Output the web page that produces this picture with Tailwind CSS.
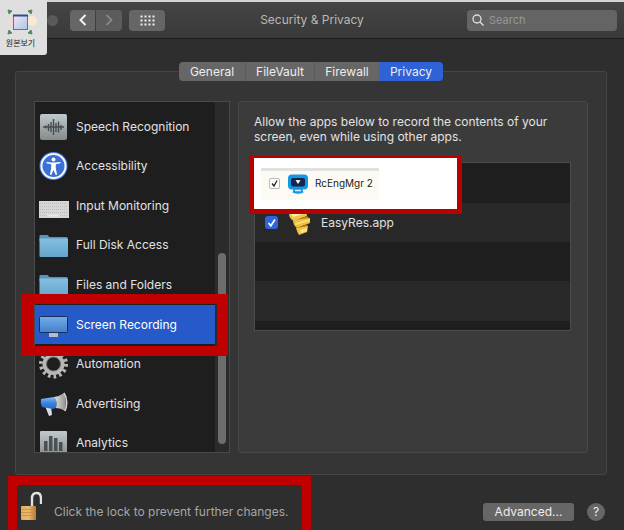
<!DOCTYPE html>
<html lang="en">
  <head>
    <meta charset="UTF-8" />
    <meta name="viewport" content="width=device-width, initial-scale=1.0" />
    <title>Security &amp; Privacy</title>
    <script src="https://cdn.jsdelivr.net/npm/@tailwindcss/browser@4"></script>
  </head>
  <body class="relative flex min-h-screen flex-col overflow-hidden bg-[#2e2e2e] font-['Inter','Noto_Sans_CJK_KR',sans-serif] text-[12px] text-[#e2e2e2]">
    <!-- Title bar -->
    <header class="grid h-[39px] grid-cols-[1fr_auto_1fr] items-center border-t-2 border-b border-t-[#d4d4d4] border-b-[#1d1d1d] bg-linear-to-b from-[#454545] to-[#393939] px-[7px]">
      <div class="flex items-center pl-10">
        <span class="size-[11px] rounded-full bg-[#5a5a5a]"></span>
        <button type="button" aria-label="Back" class="ml-3 flex h-[21px] w-[25px] items-center justify-center rounded-l bg-[#666]">
          <svg class="h-3 w-2" viewBox="0 0 8 12" fill="none" stroke="#f2f2f2" stroke-width="2"><path d="M6.5 1 1.5 6l5 5" /></svg>
        </button>
        <button type="button" aria-label="Forward" class="ml-px flex h-[21px] w-[26px] items-center justify-center rounded-r bg-[#5c5c5c]">
          <svg class="h-3 w-2" viewBox="0 0 8 12" fill="none" stroke="#8f8f8f" stroke-width="1.6"><path d="m1.500 1 5 5-5 5" /></svg>
        </button>
        <button type="button" aria-label="Show all" class="ml-[7px] flex h-[21px] w-9 items-center justify-center rounded bg-[#666]">
          <svg class="h-[11px] w-[15px]" viewBox="0 0 15 11" fill="#f0f0f0">
            <path d="M.5.5h2v2h-2zM4.500.5h2v2h-2zM8.500.5h2v2h-2zM12.500.5h2v2h-2zM.5 4.500h2v2h-2zM4.500 4.500h2v2h-2zM8.500 4.500h2v2h-2zM12.500 4.500h2v2h-2zM.5 8.500h2v2h-2zM4.500 8.500h2v2h-2zM8.500 8.500h2v2h-2zM12.500 8.500h2v2h-2z" />
          </svg>
        </button>
      </div>
      <h1 class="text-[12px] text-[#b9b9b9]">Security &amp; Privacy</h1>
      <label class="flex h-[21px] w-[150px] items-center gap-[5px] justify-self-end rounded bg-[#646464] px-[5px]">
        <svg class="size-3 shrink-0" viewBox="0 0 12 12" fill="none" stroke="#dcdcdc" stroke-width="1.400"><circle cx="5" cy="5" r="4" /><path d="m8 8 3.500 3.500" /></svg>
        <input type="search" placeholder="Search" aria-label="Search" class="min-w-0 flex-1 bg-transparent text-[11px] outline-none placeholder:text-[#979797]" />
      </label>
    </header>

    <main class="flex flex-col px-[15px] pt-[23px]">
      <nav class="relative z-10 mr-[2px] flex h-[19px] self-center overflow-hidden rounded text-[12px] text-[#eee]">
        <button type="button" class="w-[67px] border-r border-[#5a5a5a] bg-[#666]">General</button>
        <button type="button" class="w-[69px] border-r border-[#5a5a5a] bg-[#666]">FileVault</button>
        <button type="button" class="w-16 bg-[#666]">Firewall</button>
        <button type="button" class="w-16 bg-[#2f62d6]">Privacy</button>
      </nav>

      <section class="-mt-[10px] mr-[2px] flex gap-2 rounded-[3px] border border-[#454545] bg-[#353535] px-[18px] pt-[29px] pb-[21px]">
        <!-- Categories -->
        <div class="relative w-[196px] shrink-0">
          <div class="flex h-[352px] overflow-hidden border border-[#4a4a4a] bg-[#1e1e1e]">
            <ul class="grid h-[361px] flex-1 auto-rows-fr pt-[5px] text-[12px]">
              <li class="flex items-center gap-[7px] pl-1">
                <svg class="h-[30px] w-[30px]" viewBox="0 0 30 30">
                  <defs><linearGradient id="tile" x2="0" y2="1"><stop stop-color="#bfc9cc" /><stop offset="1" stop-color="#868a8b" /></linearGradient></defs>
                  <rect x="1" y="2" width="27" height="26" rx="2" fill="url(#tile)" />
                  <path d="M4 15h21M7 13.500v3M9.500 12v7M12 10v10M14.500 7v16M17 11v9M19.500 9.500v11M22 13v5" stroke="#484c4e" stroke-width="1.400" />
                </svg>
                Speech Recognition
              </li>
              <li class="flex items-center gap-[7px] pl-1">
                <svg class="h-[30px] w-[30px]" viewBox="0 0 30 30">
                  <circle cx="14.500" cy="15" r="14" fill="#4d82df" />
                  <circle cx="14.500" cy="15" r="12" fill="#3c70d6" stroke="#f3f6fd" stroke-width="2" />
                  <circle cx="14.500" cy="8.500" r="2" fill="#fff" />
                  <path d="m7.500 11 5 .5h4l5-.5v1.300l-4.700 1v4l1.300 6.500h-1.500L14.500 19l-2.100 4.800h-1.500l1.300-6.500v-4l-4.700-1z" fill="#fff" />
                </svg>
                Accessibility
              </li>
              <li class="flex items-center gap-[7px] pl-1">
                <svg class="h-[30px] w-[30px]" viewBox="0 0 30 30">
                  <rect y="10" width="30" height="17" fill="#d6d6d4" />
                  <path d="M1 12.500h28M1 15.500h28M1 18.500h28M1 21.500h28M1 24.500h28" stroke="#bcbcba" stroke-dasharray="1 1" />
                  <path d="M8 24.500h12" stroke="#e6e6e4" stroke-width="2" />
                </svg>
                Input Monitoring
              </li>
              <li class="flex items-center gap-[7px] pl-1">
                <svg class="h-[30px] w-[30px]" viewBox="0 0 30 30">
                  <defs><linearGradient id="folder" x2="0" y2="1"><stop stop-color="#83bfe0" /><stop offset="1" stop-color="#65a5cc" /></linearGradient></defs>
                  <path d="M.5 6q0-1 1-1h7l2 2h17q1 0 1 1v3H.5z" fill="#5a96ba" />
                  <path d="M.5 8.500h28.500V26q0 1-1 1H1.500q-1 0-1-1z" fill="url(#folder)" />
                </svg>
                Full Disk Access
              </li>
              <li class="flex items-center gap-[7px] pl-1">
                <svg class="h-[30px] w-[30px]" viewBox="0 0 30 30">
                  <path d="M.5 6q0-1 1-1h7l2 2h17q1 0 1 1v3H.5z" fill="#5a96ba" />
                  <path d="M.5 8.500h28.500V26q0 1-1 1H1.500q-1 0-1-1z" fill="url(#folder)" />
                </svg>
                Files and Folders
              </li>
              <li class="flex items-center gap-[7px] bg-[#255ac8] pl-1 text-white">
                <svg class="h-[30px] w-[30px]" viewBox="0 0 30 30">
                  <defs><linearGradient id="screen" x2="0" y2="1"><stop stop-color="#72aee6" /><stop offset="1" stop-color="#4280ca" /></linearGradient></defs>
                  <rect x=".5" y="6.500" width="28" height="16" rx="1" fill="url(#screen)" stroke="#182f55" />
                  <path d="M10 23h9v4h-9z" fill="#b9bcc1" />
                </svg>
                Screen Recording
              </li>
              <li class="flex items-center gap-[7px] pl-1">
                <svg class="h-[30px] w-[30px]" viewBox="0 0 30 30" fill="none" stroke="#b7b7b7">
                  <circle cx="14.500" cy="15" r="9" stroke-width="4" />
                  <circle cx="14.500" cy="15" r="12.500" stroke-width="4" stroke-dasharray="2.600 3.010" />
                  <circle cx="14.500" cy="15" r="7" stroke="#6d6d6d" />
                </svg>
                Automation
              </li>
              <li class="flex items-center gap-[7px] pl-1">
                <svg class="h-[30px] w-[30px]" viewBox="0 0 30 30">
                  <defs>
                    <linearGradient id="horn" x2="0" y2="1"><stop stop-color="#86bdf4" /><stop offset=".5" stop-color="#3b83df" /><stop offset="1" stop-color="#2569c8" /></linearGradient>
                    <linearGradient id="cone"><stop stop-color="#e2e2df" /><stop offset="1" stop-color="#93938f" /></linearGradient>
                  </defs>
                  <path d="M6 17h6l1 9-3 1z" fill="#d9dde1" />
                  <path d="m2 10 13-2q4 5 2 11l-3 1-11-2q-2-4-1-8z" fill="url(#horn)" />
                  <path d="M15 8q6-1 10-4 3 9 1 18-4-3-9-3 2-6-2-11z" fill="url(#cone)" />
                  <path d="M25 4q5 8 1 18" fill="none" stroke="#d5d5d1" stroke-width="1.500" />
                </svg>
                Advertising
              </li>
              <li class="flex items-center gap-[7px] pl-1">
                <svg class="h-[30px] w-[30px]" viewBox="0 0 30 30">
                  <rect x="1" y="3" width="27" height="26" rx="1" fill="url(#tile)" />
                  <path d="M5 13h3.500v10H5zM10 8h3.500v15H10zM15 10h3.500v13H15zM20 14h3.500v9H20z" fill="#4b5052" />
                  <path d="M4 24.500h20" stroke="#5d6264" />
                </svg>
                Analytics
              </li>
            </ul>
            <div class="w-[14px] bg-[#2b2b2b] px-[3px] pt-[151px]">
              <div class="h-[191px] rounded-full bg-[#6d6d6d]"></div>
            </div>
          </div>
          <!-- Highlight round the selected row -->
          <div class="pointer-events-none absolute top-[193px] right-[2px] -left-[13px] h-[62px] border-y-[10px] border-r-[11px] border-l-[13px] border-[#c00000]"></div>
        </div>

        <!-- Apps allowed to record -->
        <div class="min-w-0 flex-1 rounded-[3px] border border-[#484848] bg-[#3b3b3b] pt-3 pr-4 pl-[15px]">
          <p class="text-[12px] leading-[15px]">Allow the apps below to record the contents of your screen, even while using other apps.</p>
          <div class="relative mt-[18px]">
            <ul class="h-[169px] overflow-hidden border border-[#4c4c4c] bg-[#1e1e1e]">
              <li class="h-10"></li>
              <li class="flex h-[39px] items-center bg-[#282828] pl-[10px]">
                <span class="relative flex">
                  <input id="easyres" type="checkbox" checked class="size-[13px] appearance-none rounded-[3px] bg-[#2f65d8]" />
                  <svg class="pointer-events-none absolute inset-0 size-[13px]" viewBox="0 0 13 13" fill="none" stroke="#fff" stroke-width="1.700"><path d="m3.500 7 2.300 2.800L10 3.500" /></svg>
                </span>
                <label for="easyres" class="flex items-center gap-[9px] pl-[10px]">
                  <svg class="size-6" viewBox="0 0 24 24">
                    <path d="M1 2 18 0l1 5-13 5q-5-2-5-8z" fill="#eec548" />
                    <path d="m3 3 14-3 1 2-13 4z" fill="#fbeeb2" />
                    <path d="m6 10 13-5 3 3-14 5z" fill="#b87e1d" />
                    <path d="m5 9 17-2v5L9 17q-4-3-4-8z" fill="#edbf3e" />
                    <path d="m7 12 15-4v2L8 14z" fill="#f9dd72" />
                    <path d="m9 17 10-4 1 3-9 3z" fill="#a9711a" />
                    <path d="m8 17 12-2-1 6-8 3q-2-3-3-7z" fill="#efc346" />
                    <path d="m12 19 7-2v3l-6 2z" fill="#fae389" />
                  </svg>
                  EasyRes.app
                </label>
              </li>
              <li class="h-[39px]"></li>
              <li class="h-10 bg-[#282828]"></li>
            </ul>
            <!-- Callout laid over the first row -->
            <div class="absolute -top-[6px] -left-[5px] h-[58px] w-[213px] border-x-[5px] border-t-2 border-b-[5px] border-[#b80000] bg-white pt-[10px] pl-[7px]">
              <div class="flex h-8 w-[118px] items-center border-t-[3px] border-[#e1e1e1] bg-[#fdfaf3] pb-1 pl-2 text-[10px] text-[#222]">
                <span class="relative flex">
                  <input id="rceng" type="checkbox" checked class="size-[11px] appearance-none rounded-[2px] border border-[#bcbcbc] bg-white" />
                  <svg class="pointer-events-none absolute inset-0 size-[11px]" viewBox="0 0 11 11" fill="none" stroke="#222" stroke-width="1.300"><path d="m3 5.500 2 2.500 3-5.500" /></svg>
                </span>
                <label for="rceng" class="flex items-center gap-[7px] pl-2 whitespace-nowrap">
                  <svg class="size-5 shrink-0" viewBox="0 0 20 20">
                    <rect y=".5" width="20" height="15" rx="4" fill="#1296e6" />
                    <path d="M6 14h8l1.500 4.500q-5.500 2.500-11 0z" fill="#1296e6" />
                    <rect x="3" y="4" width="14" height="8.500" rx="2" fill="#17244d" />
                    <path d="m7.500 6 5 .3-2.500 3.700z" fill="#fff" />
                    <path d="M7 16.500h6" stroke="#d5f0ff" stroke-width="1.500" />
                  </svg>
                  RcEngMgr 2
                </label>
              </div>
            </div>
          </div>
        </div>
      </section>
    </main>

    <footer class="relative flex flex-1 items-center pt-[19px] pr-[19px] pl-5">
      <div class="pointer-events-none absolute top-px left-2 h-[70px] w-[303px] border-[9px] border-[#c00000]"></div>
      <button type="button" class="flex items-center gap-3 text-[#a6a6a6]">
        <svg class="-mt-3 h-[30px] w-[22px]" viewBox="0 0 22 30">
          <defs><linearGradient id="brass"><stop stop-color="#e6ae5e" /><stop offset=".5" stop-color="#e9b870" /><stop offset="1" stop-color="#b87a30" /></linearGradient></defs>
          <path d="M12 15V7.500Q12 2 16.500 2T21 7.500V13" fill="none" stroke="#dfe3e6" stroke-width="2.400" />
          <rect x="1" y="15" width="15" height="14" rx="1" fill="url(#brass)" />
          <path d="M1 18.500h15M1 21.500h15M1 24.500h15" stroke="#c48a40" stroke-width=".7" />
        </svg>
        Click the lock to prevent further changes.
      </button>
      <button type="button" class="ml-auto h-[18px] w-[91px] rounded-[3px] bg-[#666] text-[#eee]">Advanced...</button>
      <button type="button" aria-label="Help" class="ml-[13px] size-[18px] rounded-full bg-[#666] text-[#eee]">?</button>
    </footer>

    <!-- View original -->
    <button type="button" class="absolute top-0 left-0 flex h-[55px] w-[47px] flex-col items-center rounded-br-[3px] bg-[#dfdfdf] pt-[9px] pr-[6px] text-[8px] leading-[13px] text-[#222]">
      <svg class="h-[28px] w-[32px]" viewBox="0 0 32 28">
        <circle cx="8" cy="12" r="5" fill="#f4d9dc" />
        <circle cx="27" cy="12" r="5" fill="#fae9d2" />
        <defs><linearGradient id="frame" x2="1" y2="1"><stop stop-color="#f5e3ee" /><stop offset="1" stop-color="#a9c6ea" /></linearGradient></defs>
        <rect x="8.500" y="6.500" width="14" height="14" fill="url(#frame)" stroke="#5875a4" />
        <path d="M8 6.500h15" stroke="#304f88" stroke-width="2" />
        <path d="m3 1 4 1-3 3zM27 1l-4 1 3 3zM3 25l4-1-3-3zM27 25l-4-1 3-3z" fill="#538a5d" stroke="#538a5d" />
      </svg>
      <span lang="ko">원본보기</span>
    </button>
  </body>
</html>
